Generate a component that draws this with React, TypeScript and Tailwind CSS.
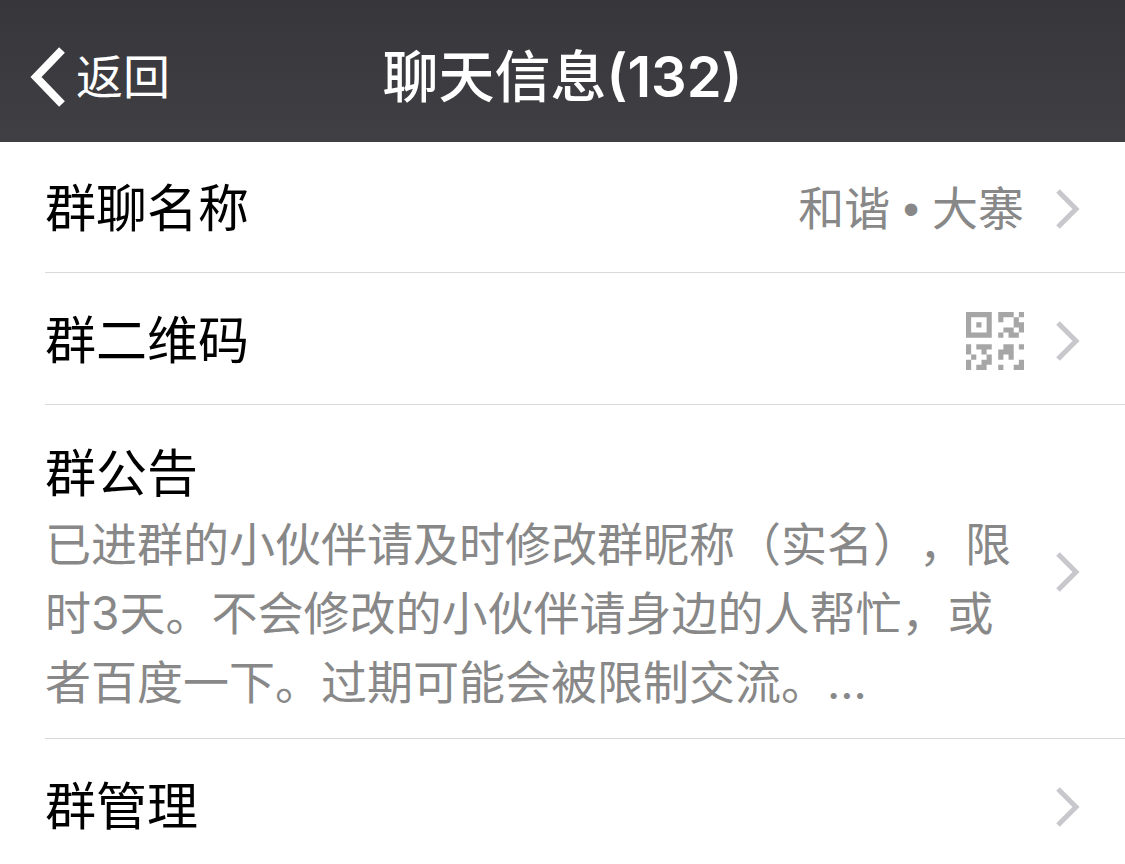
import type { ReactNode } from "react";

// "#" marks a filled module
const qrModules = [
  "#####.###.#",
  "#...#.#..#.",
  "#.#.#....##",
  "#...#..##.#",
  "#####.#.##.",
  "...........",
  "#.###..##.#",
  "#..#..###..",
  ".#..#.#.#..",
  "#..##.....#",
  "#.##..#..##",
];

// the middle row and column are slightly wider than a module
const modulePos = (i: number) => i * 51 + (i > 5 ? 13 : 0);

const qrPath = qrModules
  .flatMap((row, y) =>
    row.split("").map((cell, x) => (cell === "#" ? `M${modulePos(x)} ${modulePos(y)}h51v51h-51z` : ""))
  )
  .join("");

function QrIcon() {
  return (
    <svg viewBox="0 0 574 574" className="h-[58px] w-[58px] shrink-0 text-[#a6a6a6]" fill="currentColor" aria-hidden="true">
      <path d={qrPath} />
    </svg>
  );
}

function ChevronRight() {
  return (
    <svg viewBox="0 0 24 40" className="h-10 w-6 shrink-0" fill="none" stroke="#c7c7cc" strokeWidth="5" aria-hidden="true">
      <path d="M2 2 L20 20 L2 38" />
    </svg>
  );
}

function Row({ label, value, note }: { label: string; value?: ReactNode; note?: string }) {
  return (
    <li className="border-b border-[#d9d9d9]">
      <button
        type="button"
        className={`flex w-full items-center justify-between gap-8 pr-[45px] text-left ${note ? "min-h-[333px]" : "min-h-[131px] pt-[5px]"}`}
      >
        <span className={`min-w-0 flex-1 ${note ? "pt-[11px]" : ""}`}>
          <span className="block text-[51px] leading-[72px] text-black">{label}</span>
          {note && <span className="block text-[46px] leading-[69px] text-[#888] [text-spacing-trim:space-all]">{note}</span>}
        </span>
        {value}
        <ChevronRight />
      </button>
    </li>
  );
}

export default function App() {
  return (
    <div className="h-screen overflow-hidden bg-white font-['Inter','Noto_Sans_CJK_SC',sans-serif]" lang="zh-CN">
      <header className="grid h-[142px] grid-cols-[1fr_auto_1fr] items-center bg-linear-to-b from-[#37363b] to-[#403f44] pt-3 text-white">
        <button type="button" className="flex items-center gap-2.5 pl-[30px] text-[47px] leading-[60px]">
          <svg viewBox="0 0 36 60" className="h-[60px] w-9" fill="none" stroke="currentColor" strokeWidth="8" aria-hidden="true">
            <path d="M32 3 L6 30 L32 57" />
          </svg>
          返回
        </button>
        <h1 className="text-[56px] leading-[72px] font-medium">
          聊天信息<span className="font-semibold">(132)</span>
        </h1>
      </header>

      <main className="-mt-px">
        <ul className="pl-[45px]">
          <Row
            label="群聊名称"
            value={
              <span className="font-['Liberation_Sans','Noto_Sans_CJK_SC',sans-serif] text-[46px] leading-[60px] text-[#888]">
                和谐 • 大寨
              </span>
            }
          />
          <Row label="群二维码" value={<QrIcon />} />
          <Row
            label="群公告"
            note="已进群的小伙伴请及时修改群昵称（实名），限时3天。不会修改的小伙伴请身边的人帮忙，或者百度一下。过期可能会被限制交流。..."
          />
          <Row label="群管理" />
        </ul>
      </main>
    </div>
  );
}
